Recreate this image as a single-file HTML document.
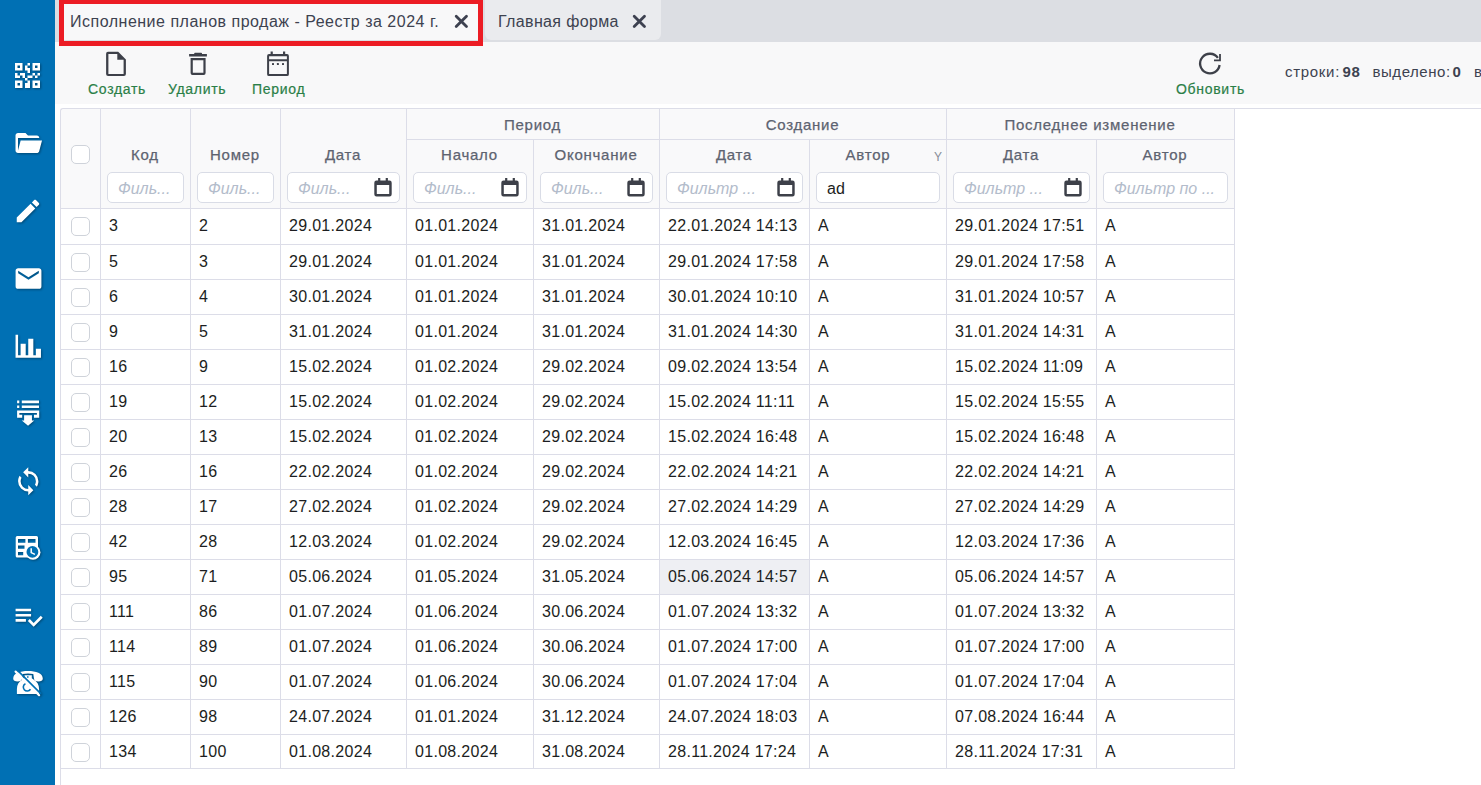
<!DOCTYPE html><html><head><meta charset="utf-8"><style>html,body{margin:0;padding:0}
body{width:1481px;height:785px;overflow:hidden;background:#fff;position:relative;font-family:"Liberation Sans",sans-serif;color:#212529}
div{box-sizing:border-box}
.abs{position:absolute}
#side{position:absolute;left:0;top:0;width:55px;height:785px;background:#0070b4}
#side svg{position:absolute;left:14px;width:28px;height:28px}
#tabbar{position:absolute;left:55px;top:0;width:1426px;height:42px;background:#dcdee3}
#toolbar{position:absolute;left:55px;top:42px;width:1426px;height:62px;background:#f8f8f9}
.tab{position:absolute;top:0;height:40px;background:#eaebee;border-radius:0 0 6px 6px;font-size:16px;color:#3d4250;line-height:42px;white-space:nowrap}
.tab.act{background:#f8f8f9}
.redbox{position:absolute;left:59px;top:0;width:424px;height:46px;border:5px solid #ec1c24;border-top-width:4px}
.btn{position:absolute;font-size:14px;font-weight:normal;-webkit-text-stroke:0.2px #2b7f48;letter-spacing:0.7px;color:#2b7f48;white-space:nowrap}
.hbg{position:absolute;background:#f9f9fa}
.vl{position:absolute;width:1px;background:#dcdde8}
.hl{position:absolute;height:1px;background:#dcdde8}
.cb{position:absolute;width:19px;height:19px;border:1px solid #cfd3da;border-radius:5px;background:#fff}
.cell{position:absolute;font-size:16px;padding-left:8px;letter-spacing:0.3px;white-space:nowrap;overflow:hidden;color:#1c1e21}
.hlc{background:#eeeff3}
.hd{position:absolute;font-size:15px;font-weight:normal;-webkit-text-stroke:0.25px #5d6370;letter-spacing:0.75px;color:#5d6370;text-align:center;white-space:nowrap}
.inp{position:absolute;top:172px;height:31px;border:1px solid #d9dce6;border-radius:5px;background:#fff;font-size:16px;font-style:italic;color:#b3bccb;padding-left:10px;padding-top:1px;line-height:29px;white-space:nowrap;overflow:hidden}
.sh{filter:drop-shadow(1px 1px 0.8px rgba(0,0,0,0.35))}
.tt{position:absolute;top:1px}
.stats{position:absolute;font-size:15px;letter-spacing:0.7px;color:#3d4250;white-space:nowrap}
.stats b{font-weight:bold}
.inp.val{font-style:normal;color:#1c1e21}
</style></head><body>
<div id="side">
<svg style="left:15px;top:63px;width:25px;height:25px" viewBox="0 0 25 25" class="sh"><path fill="#fff" fill-rule="nonzero" d="M0.0,0.0H7.5V7.5H0.0Z M2.5,2.5V5.0H5.0V2.5Z M17.5,0.0H25.0V7.5H17.5Z M20.0,2.5V5.0H22.5V2.5Z M0.0,17.5H7.5V25.0H0.0Z M2.5,20.0V22.5H5.0V20.0Z M17.5,17.5H25.0V25.0H17.5Z M20.0,20.0V22.5H22.5V20.0Z M12.5,0.0H15.0V2.5H12.5Z M10.0,2.5H12.5V5.0H10.0Z M10.0,5.0H12.5V7.5H10.0Z M12.5,5.0H15.0V7.5H12.5Z M12.5,7.5H15.0V10.0H12.5Z M0.0,10.0H2.5V12.5H0.0Z M5.0,10.0H7.5V12.5H5.0Z M7.5,10.0H10.0V12.5H7.5Z M17.5,10.0H20.0V12.5H17.5Z M22.5,10.0H25.0V12.5H22.5Z M0.0,12.5H2.5V15.0H0.0Z M2.5,12.5H5.0V15.0H2.5Z M7.5,12.5H10.0V15.0H7.5Z M12.5,12.5H15.0V15.0H12.5Z M15.0,12.5H17.5V15.0H15.0Z M20.0,12.5H22.5V15.0H20.0Z M10.0,15.0H12.5V17.5H10.0Z M12.5,17.5H15.0V20.0H12.5Z M12.5,20.0H15.0V22.5H12.5Z M12.5,22.5H15.0V25.0H12.5Z M10.0,20.0H12.5V22.5H10.0Z M10.0,22.5H12.5V25.0H10.0Z"/></svg>
<svg style="left:13px;top:127.7px;width:30px;height:30px" viewBox="0 0 24 24" class="sh"><path fill="#fff" d="M19,20H4C2.89,20 2,19.1 2,18V6C2,4.89 2.89,4 4,4H10L12,6H19A2,2 0 0,1 21,8H21L4,8V18L6.14,10H23.21L20.93,18.5C20.7,19.37 19.92,20 19,20Z"/></svg>
<svg style="left:12.6px;top:195.8px;width:30px;height:30px" viewBox="0 0 24 24" class="sh"><path fill="#fff" d="M20.71,7.04C21.1,6.65 21.1,6 20.71,5.63L18.37,3.29C18,2.9 17.35,2.9 16.96,3.29L15.12,5.12L18.87,8.87M3,17.25V21H6.75L17.81,9.93L14.06,6.18L3,17.25Z"/></svg>
<svg style="left:12.7px;top:262.7px;width:31px;height:31px" viewBox="0 0 24 24" class="sh"><path fill="#fff" d="M20,8L12,13L4,8V6L12,11L20,6M20,4H4C2.89,4 2,4.89 2,6V18A2,2 0 0,0 4,20H20A2,2 0 0,0 22,18V6C22,4.89 21.1,4 20,4Z"/></svg>
<svg style="left:12.8px;top:331px;width:30.5px;height:30.5px" viewBox="0 0 24 24" class="sh"><path fill="#fff" d="M22,21H2V3H4V19H6V10H10V19H12V6H16V19H18V14H22V21Z"/></svg>
<svg style="left:16px;top:400px;width:26px;height:27px" viewBox="0 0 26 27" class="sh"><path fill="#fff" d="M1.1,0.5H3.3V3.2H1.1Z M5.8,0.5H23V3.2H5.8Z M1.1,5.4H3.3V8.1H1.1Z M5.8,5.4H23V8.1H5.8Z M1.1,10.4H23.2V17.7H18V14.8H20.9V13.1H3.35V14.8H6.2V17.7H1.1Z M8.1,15.2H15.95V20.5H18.2L12.05,25.7L5.8,20.5H8.1Z"/></svg>
<svg style="left:12.8px;top:466px;width:30.5px;height:30.5px" viewBox="0 0 24 24" class="sh"><path fill="#fff" d="M12,18A6,6 0 0,1 6,12C6,11 6.25,10.03 6.7,9.2L5.24,7.74C4.46,8.97 4,10.43 4,12A8,8 0 0,0 12,20V23L16,19L12,15M12,4V1L8,5L12,9V6A6,6 0 0,1 18,12C18,13 17.75,13.97 17.3,14.8L18.76,16.26C19.54,15.03 20,13.57 20,12A8,8 0 0,0 12,4Z"/></svg>
<svg style="left:15px;top:535px;width:27px;height:27px" viewBox="0 0 27 27" class="sh"><path fill="#fff" fill-rule="evenodd" d="M2.2,0.9H21.5A1.5,1.5 0 0 1 23,2.4V21.1A1.5,1.5 0 0 1 21.5,22.6H2.2A1.5,1.5 0 0 1 0.7,21.1V2.4A1.5,1.5 0 0 1 2.2,0.9Z M3,4.1V7.7H10.4V4.1Z M12.9,4.1V7.7H20.5V4.1Z M3,10.4V13.7H9.5V10.4Z M3,16.9V20.2H8.2V16.9Z"/><circle cx="18" cy="17.3" r="7.45" fill="#fff"/><circle cx="17.4" cy="16.9" r="5.9" fill="#0070b4"/><path d="M16.2,13.3V17.6L19.9,19.4" fill="none" stroke="#fff" stroke-width="1.5"/></svg>
<svg style="left:12.7px;top:600.5px;width:31px;height:31px" viewBox="0 0 24 24" class="sh"><path fill="#fff" d="M14,10H2V12H14V10M14,6H2V8H14V6M2,16H10V14H2V16M21.5,11.5L23,13L16,20L11.5,15.5L13,14L16,17L21.5,11.5Z"/></svg>
<svg style="left:11px;top:668px;width:34px;height:32px" viewBox="0 0 34 32" class="sh"><path fill="#fff" d="M2.2,10.5C2.2,5 9,2.9 17,2.9C25,2.9 31.8,5 31.8,10.5C31.8,12.8 30,13.5 27.5,13.5C24.5,13.5 23,12.5 23,10.5L22.3,5.9C19,5.2 15,5.2 11.7,5.9L11,10.5C11,12.5 9.5,13.5 6.5,13.5C4,13.5 2.2,12.8 2.2,10.5Z"/><path fill="#fff" d="M13.5,7.3H20.8V10.2L22.5,11.5C26,13.5 28.1,16.5 28.1,21V26.1H5.9V21C5.9,16.5 8,13.5 11.5,11.5L13.5,10.2Z"/><rect x="16.1" y="8.2" width="1.4" height="1.6" fill="#0070b4"/><path d="M19.5,21.2A3.9,3.9 0 1 1 14.5,15.6" fill="none" stroke="#0070b4" stroke-width="1.6"/><path d="M6.2,2.1L30,25.9" stroke="#0070b4" stroke-width="1.7"/><path d="M4.6,3.6L28.1,27.2" stroke="#fff" stroke-width="2.2" stroke-linecap="round"/></svg>
</div>
<div id="tabbar"></div>
<div id="toolbar"></div>
<div class="tab act" style="left:59px;width:424px"><span class="tt" style="left:11px;letter-spacing:0.5px">Исполнение планов продаж - Реестр за 2024 г.</span>
<svg style="position:absolute;left:389px;top:8px" width="26" height="26" viewBox="0 0 26 26"><path d="M8.2,8.2L18.5,18.5M18.5,8.2L8.2,18.5" stroke="#3d4150" stroke-width="2.8" stroke-linecap="round"/></svg></div>
<div class="redbox"></div>
<div class="tab" style="left:485px;width:176px"><span class="tt" style="left:13px;letter-spacing:0.35px">Главная форма</span>
<svg style="position:absolute;left:141px;top:8px" width="26" height="26" viewBox="0 0 26 26"><path d="M8.2,8.2L18.5,18.5M18.5,8.2L8.2,18.5" stroke="#3d4150" stroke-width="2.8" stroke-linecap="round"/></svg></div>

<svg class="abs" style="left:100px;top:48px" width="32" height="32" viewBox="0 0 32 32"><path fill="#3d4049" fill-rule="evenodd" d="M8,3.7H18.2L25.9,11.4V26.1A2,2 0 0 1 23.9,28.1H8.1A2,2 0 0 1 6.1,26.1V5.7A2,2 0 0 1 8,3.7Z M8.4,5.9V25.9H23.6V11.8H17.3V5.9Z"/></svg>
<svg class="abs" style="left:182px;top:48px" width="32" height="32" viewBox="0 0 32 32"><path fill="#3d4049" fill-rule="evenodd" d="M13,4.7H19.2A0.8,0.8 0 0 1 20,5.5V6.1H24.9V8.6H7.1V6.1H12.2V5.5A0.8,0.8 0 0 1 13,4.7Z M8.6,10H23.6V25A1.9,1.9 0 0 1 21.7,26.9H10.5A1.9,1.9 0 0 1 8.6,25Z M10.8,12.2V24.7H21.4V12.2Z"/></svg>
<svg class="abs" style="left:262px;top:48px" width="32" height="32" viewBox="0 0 32 32"><path fill="#3d4049" fill-rule="evenodd" d="M8.6,3.5H10.8V6.1H21V3.5H23.2V6.1H25A1.9,1.9 0 0 1 26.9,8V26.2A1.9,1.9 0 0 1 25,28.1H7A1.9,1.9 0 0 1 5.1,26.2V8A1.9,1.9 0 0 1 7,6.1H8.6Z M7.1,8.2V11.2H24.9V8.2Z M7.1,13.2V26.1H24.9V13.2Z"/><rect x="10" y="14.9" width="2" height="2" rx="0.5" fill="#3d4049"/><rect x="14.9" y="14.9" width="2" height="2" rx="0.5" fill="#3d4049"/><rect x="20" y="14.9" width="2" height="2" rx="0.5" fill="#3d4049"/></svg>
<svg class="abs" style="left:1194px;top:48px" width="32" height="32" viewBox="0 0 32 32"><path d="M25.6,17.0A9.8,9.8 0 1 1 23.9,9.9" fill="none" stroke="#3d4049" stroke-width="2.3"/><path fill="#3d4049" d="M25.1,6.1H26.9V13.2H20V11.4H25.1Z"/></svg>
<div class="btn" style="left:88px;top:81px">Создать</div>
<div class="btn" style="left:168px;top:81px">Удалить</div>
<div class="btn" style="left:252px;top:81px">Период</div>
<div class="btn" style="left:1176px;top:81px">Обновить</div>
<div class="stats" style="left:1285px;top:63px">строки:</div><div class="stats" style="left:1342.5px;top:63px;font-weight:bold">98</div><div class="stats" style="left:1372.5px;top:63px;letter-spacing:0.55px">выделено:</div><div class="stats" style="left:1452.5px;top:63px;font-weight:bold">0</div><div class="stats" style="left:1474px;top:63px">в</div>

<div class="hbg" style="left:61px;top:109px;width:1173px;height:99px;border-top-left-radius:2px"></div><div class="vl" style="left:100px;top:108px;height:660px"></div><div class="vl" style="left:190px;top:108px;height:660px"></div><div class="vl" style="left:280px;top:108px;height:660px"></div><div class="vl" style="left:406px;top:108px;height:660px"></div><div class="vl" style="left:659px;top:108px;height:660px"></div><div class="vl" style="left:946px;top:108px;height:660px"></div><div class="vl" style="left:1234px;top:108px;height:660px"></div><div class="vl" style="left:533px;top:139px;height:629px"></div><div class="vl" style="left:809px;top:139px;height:629px"></div><div class="vl" style="left:1096px;top:139px;height:629px"></div><div class="abs" style="left:60px;top:108px;width:1421px;height:677px;border-top:1px solid #dcdde8;border-left:1px solid #dcdde8;border-top-left-radius:3px"></div><div class="hl" style="left:406px;top:139px;width:828px"></div><div class="hl" style="left:60px;top:208px;width:1175px"></div><div class="hl" style="left:60px;top:244px;width:1175px"></div><div class="hl" style="left:60px;top:279px;width:1175px"></div><div class="hl" style="left:60px;top:314px;width:1175px"></div><div class="hl" style="left:60px;top:349px;width:1175px"></div><div class="hl" style="left:60px;top:384px;width:1175px"></div><div class="hl" style="left:60px;top:419px;width:1175px"></div><div class="hl" style="left:60px;top:454px;width:1175px"></div><div class="hl" style="left:60px;top:489px;width:1175px"></div><div class="hl" style="left:60px;top:524px;width:1175px"></div><div class="hl" style="left:60px;top:559px;width:1175px"></div><div class="hl" style="left:60px;top:594px;width:1175px"></div><div class="hl" style="left:60px;top:629px;width:1175px"></div><div class="hl" style="left:60px;top:664px;width:1175px"></div><div class="hl" style="left:60px;top:699px;width:1175px"></div><div class="hl" style="left:60px;top:734px;width:1175px"></div><div class="hl" style="left:60px;top:768px;width:1175px"></div><div class="cb" style="left:71px;top:217px"></div><div class="cell" style="left:101px;top:209px;width:89px;height:35px;line-height:33px">3</div><div class="cell" style="left:191px;top:209px;width:89px;height:35px;line-height:33px">2</div><div class="cell" style="left:281px;top:209px;width:125px;height:35px;line-height:33px">29.01.2024</div><div class="cell" style="left:407px;top:209px;width:126px;height:35px;line-height:33px">01.01.2024</div><div class="cell" style="left:534px;top:209px;width:125px;height:35px;line-height:33px">31.01.2024</div><div class="cell" style="left:660px;top:209px;width:149px;height:35px;line-height:33px">22.01.2024 14:13</div><div class="cell" style="left:810px;top:209px;width:136px;height:35px;line-height:33px">A</div><div class="cell" style="left:947px;top:209px;width:149px;height:35px;line-height:33px">29.01.2024 17:51</div><div class="cell" style="left:1097px;top:209px;width:137px;height:35px;line-height:33px">A</div><div class="cb" style="left:71px;top:253px"></div><div class="cell" style="left:101px;top:245px;width:89px;height:34px;line-height:33px">5</div><div class="cell" style="left:191px;top:245px;width:89px;height:34px;line-height:33px">3</div><div class="cell" style="left:281px;top:245px;width:125px;height:34px;line-height:33px">29.01.2024</div><div class="cell" style="left:407px;top:245px;width:126px;height:34px;line-height:33px">01.01.2024</div><div class="cell" style="left:534px;top:245px;width:125px;height:34px;line-height:33px">31.01.2024</div><div class="cell" style="left:660px;top:245px;width:149px;height:34px;line-height:33px">29.01.2024 17:58</div><div class="cell" style="left:810px;top:245px;width:136px;height:34px;line-height:33px">A</div><div class="cell" style="left:947px;top:245px;width:149px;height:34px;line-height:33px">29.01.2024 17:58</div><div class="cell" style="left:1097px;top:245px;width:137px;height:34px;line-height:33px">A</div><div class="cb" style="left:71px;top:288px"></div><div class="cell" style="left:101px;top:280px;width:89px;height:34px;line-height:33px">6</div><div class="cell" style="left:191px;top:280px;width:89px;height:34px;line-height:33px">4</div><div class="cell" style="left:281px;top:280px;width:125px;height:34px;line-height:33px">30.01.2024</div><div class="cell" style="left:407px;top:280px;width:126px;height:34px;line-height:33px">01.01.2024</div><div class="cell" style="left:534px;top:280px;width:125px;height:34px;line-height:33px">31.01.2024</div><div class="cell" style="left:660px;top:280px;width:149px;height:34px;line-height:33px">30.01.2024 10:10</div><div class="cell" style="left:810px;top:280px;width:136px;height:34px;line-height:33px">A</div><div class="cell" style="left:947px;top:280px;width:149px;height:34px;line-height:33px">31.01.2024 10:57</div><div class="cell" style="left:1097px;top:280px;width:137px;height:34px;line-height:33px">A</div><div class="cb" style="left:71px;top:323px"></div><div class="cell" style="left:101px;top:315px;width:89px;height:34px;line-height:33px">9</div><div class="cell" style="left:191px;top:315px;width:89px;height:34px;line-height:33px">5</div><div class="cell" style="left:281px;top:315px;width:125px;height:34px;line-height:33px">31.01.2024</div><div class="cell" style="left:407px;top:315px;width:126px;height:34px;line-height:33px">01.01.2024</div><div class="cell" style="left:534px;top:315px;width:125px;height:34px;line-height:33px">31.01.2024</div><div class="cell" style="left:660px;top:315px;width:149px;height:34px;line-height:33px">31.01.2024 14:30</div><div class="cell" style="left:810px;top:315px;width:136px;height:34px;line-height:33px">A</div><div class="cell" style="left:947px;top:315px;width:149px;height:34px;line-height:33px">31.01.2024 14:31</div><div class="cell" style="left:1097px;top:315px;width:137px;height:34px;line-height:33px">A</div><div class="cb" style="left:71px;top:358px"></div><div class="cell" style="left:101px;top:350px;width:89px;height:34px;line-height:33px">16</div><div class="cell" style="left:191px;top:350px;width:89px;height:34px;line-height:33px">9</div><div class="cell" style="left:281px;top:350px;width:125px;height:34px;line-height:33px">15.02.2024</div><div class="cell" style="left:407px;top:350px;width:126px;height:34px;line-height:33px">01.02.2024</div><div class="cell" style="left:534px;top:350px;width:125px;height:34px;line-height:33px">29.02.2024</div><div class="cell" style="left:660px;top:350px;width:149px;height:34px;line-height:33px">09.02.2024 13:54</div><div class="cell" style="left:810px;top:350px;width:136px;height:34px;line-height:33px">A</div><div class="cell" style="left:947px;top:350px;width:149px;height:34px;line-height:33px">15.02.2024 11:09</div><div class="cell" style="left:1097px;top:350px;width:137px;height:34px;line-height:33px">A</div><div class="cb" style="left:71px;top:393px"></div><div class="cell" style="left:101px;top:385px;width:89px;height:34px;line-height:33px">19</div><div class="cell" style="left:191px;top:385px;width:89px;height:34px;line-height:33px">12</div><div class="cell" style="left:281px;top:385px;width:125px;height:34px;line-height:33px">15.02.2024</div><div class="cell" style="left:407px;top:385px;width:126px;height:34px;line-height:33px">01.02.2024</div><div class="cell" style="left:534px;top:385px;width:125px;height:34px;line-height:33px">29.02.2024</div><div class="cell" style="left:660px;top:385px;width:149px;height:34px;line-height:33px">15.02.2024 11:11</div><div class="cell" style="left:810px;top:385px;width:136px;height:34px;line-height:33px">A</div><div class="cell" style="left:947px;top:385px;width:149px;height:34px;line-height:33px">15.02.2024 15:55</div><div class="cell" style="left:1097px;top:385px;width:137px;height:34px;line-height:33px">A</div><div class="cb" style="left:71px;top:428px"></div><div class="cell" style="left:101px;top:420px;width:89px;height:34px;line-height:33px">20</div><div class="cell" style="left:191px;top:420px;width:89px;height:34px;line-height:33px">13</div><div class="cell" style="left:281px;top:420px;width:125px;height:34px;line-height:33px">15.02.2024</div><div class="cell" style="left:407px;top:420px;width:126px;height:34px;line-height:33px">01.02.2024</div><div class="cell" style="left:534px;top:420px;width:125px;height:34px;line-height:33px">29.02.2024</div><div class="cell" style="left:660px;top:420px;width:149px;height:34px;line-height:33px">15.02.2024 16:48</div><div class="cell" style="left:810px;top:420px;width:136px;height:34px;line-height:33px">A</div><div class="cell" style="left:947px;top:420px;width:149px;height:34px;line-height:33px">15.02.2024 16:48</div><div class="cell" style="left:1097px;top:420px;width:137px;height:34px;line-height:33px">A</div><div class="cb" style="left:71px;top:463px"></div><div class="cell" style="left:101px;top:455px;width:89px;height:34px;line-height:33px">26</div><div class="cell" style="left:191px;top:455px;width:89px;height:34px;line-height:33px">16</div><div class="cell" style="left:281px;top:455px;width:125px;height:34px;line-height:33px">22.02.2024</div><div class="cell" style="left:407px;top:455px;width:126px;height:34px;line-height:33px">01.02.2024</div><div class="cell" style="left:534px;top:455px;width:125px;height:34px;line-height:33px">29.02.2024</div><div class="cell" style="left:660px;top:455px;width:149px;height:34px;line-height:33px">22.02.2024 14:21</div><div class="cell" style="left:810px;top:455px;width:136px;height:34px;line-height:33px">A</div><div class="cell" style="left:947px;top:455px;width:149px;height:34px;line-height:33px">22.02.2024 14:21</div><div class="cell" style="left:1097px;top:455px;width:137px;height:34px;line-height:33px">A</div><div class="cb" style="left:71px;top:498px"></div><div class="cell" style="left:101px;top:490px;width:89px;height:34px;line-height:33px">28</div><div class="cell" style="left:191px;top:490px;width:89px;height:34px;line-height:33px">17</div><div class="cell" style="left:281px;top:490px;width:125px;height:34px;line-height:33px">27.02.2024</div><div class="cell" style="left:407px;top:490px;width:126px;height:34px;line-height:33px">01.02.2024</div><div class="cell" style="left:534px;top:490px;width:125px;height:34px;line-height:33px">29.02.2024</div><div class="cell" style="left:660px;top:490px;width:149px;height:34px;line-height:33px">27.02.2024 14:29</div><div class="cell" style="left:810px;top:490px;width:136px;height:34px;line-height:33px">A</div><div class="cell" style="left:947px;top:490px;width:149px;height:34px;line-height:33px">27.02.2024 14:29</div><div class="cell" style="left:1097px;top:490px;width:137px;height:34px;line-height:33px">A</div><div class="cb" style="left:71px;top:533px"></div><div class="cell" style="left:101px;top:525px;width:89px;height:34px;line-height:33px">42</div><div class="cell" style="left:191px;top:525px;width:89px;height:34px;line-height:33px">28</div><div class="cell" style="left:281px;top:525px;width:125px;height:34px;line-height:33px">12.03.2024</div><div class="cell" style="left:407px;top:525px;width:126px;height:34px;line-height:33px">01.02.2024</div><div class="cell" style="left:534px;top:525px;width:125px;height:34px;line-height:33px">29.02.2024</div><div class="cell" style="left:660px;top:525px;width:149px;height:34px;line-height:33px">12.03.2024 16:45</div><div class="cell" style="left:810px;top:525px;width:136px;height:34px;line-height:33px">A</div><div class="cell" style="left:947px;top:525px;width:149px;height:34px;line-height:33px">12.03.2024 17:36</div><div class="cell" style="left:1097px;top:525px;width:137px;height:34px;line-height:33px">A</div><div class="cb" style="left:71px;top:568px"></div><div class="cell" style="left:101px;top:560px;width:89px;height:34px;line-height:33px">95</div><div class="cell" style="left:191px;top:560px;width:89px;height:34px;line-height:33px">71</div><div class="cell" style="left:281px;top:560px;width:125px;height:34px;line-height:33px">05.06.2024</div><div class="cell" style="left:407px;top:560px;width:126px;height:34px;line-height:33px">01.05.2024</div><div class="cell" style="left:534px;top:560px;width:125px;height:34px;line-height:33px">31.05.2024</div><div class="cell hlc" style="left:660px;top:560px;width:149px;height:34px;line-height:33px">05.06.2024 14:57</div><div class="cell" style="left:810px;top:560px;width:136px;height:34px;line-height:33px">A</div><div class="cell" style="left:947px;top:560px;width:149px;height:34px;line-height:33px">05.06.2024 14:57</div><div class="cell" style="left:1097px;top:560px;width:137px;height:34px;line-height:33px">A</div><div class="cb" style="left:71px;top:603px"></div><div class="cell" style="left:101px;top:595px;width:89px;height:34px;line-height:33px">111</div><div class="cell" style="left:191px;top:595px;width:89px;height:34px;line-height:33px">86</div><div class="cell" style="left:281px;top:595px;width:125px;height:34px;line-height:33px">01.07.2024</div><div class="cell" style="left:407px;top:595px;width:126px;height:34px;line-height:33px">01.06.2024</div><div class="cell" style="left:534px;top:595px;width:125px;height:34px;line-height:33px">30.06.2024</div><div class="cell" style="left:660px;top:595px;width:149px;height:34px;line-height:33px">01.07.2024 13:32</div><div class="cell" style="left:810px;top:595px;width:136px;height:34px;line-height:33px">A</div><div class="cell" style="left:947px;top:595px;width:149px;height:34px;line-height:33px">01.07.2024 13:32</div><div class="cell" style="left:1097px;top:595px;width:137px;height:34px;line-height:33px">A</div><div class="cb" style="left:71px;top:638px"></div><div class="cell" style="left:101px;top:630px;width:89px;height:34px;line-height:33px">114</div><div class="cell" style="left:191px;top:630px;width:89px;height:34px;line-height:33px">89</div><div class="cell" style="left:281px;top:630px;width:125px;height:34px;line-height:33px">01.07.2024</div><div class="cell" style="left:407px;top:630px;width:126px;height:34px;line-height:33px">01.06.2024</div><div class="cell" style="left:534px;top:630px;width:125px;height:34px;line-height:33px">30.06.2024</div><div class="cell" style="left:660px;top:630px;width:149px;height:34px;line-height:33px">01.07.2024 17:00</div><div class="cell" style="left:810px;top:630px;width:136px;height:34px;line-height:33px">A</div><div class="cell" style="left:947px;top:630px;width:149px;height:34px;line-height:33px">01.07.2024 17:00</div><div class="cell" style="left:1097px;top:630px;width:137px;height:34px;line-height:33px">A</div><div class="cb" style="left:71px;top:673px"></div><div class="cell" style="left:101px;top:665px;width:89px;height:34px;line-height:33px">115</div><div class="cell" style="left:191px;top:665px;width:89px;height:34px;line-height:33px">90</div><div class="cell" style="left:281px;top:665px;width:125px;height:34px;line-height:33px">01.07.2024</div><div class="cell" style="left:407px;top:665px;width:126px;height:34px;line-height:33px">01.06.2024</div><div class="cell" style="left:534px;top:665px;width:125px;height:34px;line-height:33px">30.06.2024</div><div class="cell" style="left:660px;top:665px;width:149px;height:34px;line-height:33px">01.07.2024 17:04</div><div class="cell" style="left:810px;top:665px;width:136px;height:34px;line-height:33px">A</div><div class="cell" style="left:947px;top:665px;width:149px;height:34px;line-height:33px">01.07.2024 17:04</div><div class="cell" style="left:1097px;top:665px;width:137px;height:34px;line-height:33px">A</div><div class="cb" style="left:71px;top:708px"></div><div class="cell" style="left:101px;top:700px;width:89px;height:34px;line-height:33px">126</div><div class="cell" style="left:191px;top:700px;width:89px;height:34px;line-height:33px">98</div><div class="cell" style="left:281px;top:700px;width:125px;height:34px;line-height:33px">24.07.2024</div><div class="cell" style="left:407px;top:700px;width:126px;height:34px;line-height:33px">01.01.2024</div><div class="cell" style="left:534px;top:700px;width:125px;height:34px;line-height:33px">31.12.2024</div><div class="cell" style="left:660px;top:700px;width:149px;height:34px;line-height:33px">24.07.2024 18:03</div><div class="cell" style="left:810px;top:700px;width:136px;height:34px;line-height:33px">A</div><div class="cell" style="left:947px;top:700px;width:149px;height:34px;line-height:33px">07.08.2024 16:44</div><div class="cell" style="left:1097px;top:700px;width:137px;height:34px;line-height:33px">A</div><div class="cb" style="left:71px;top:743px"></div><div class="cell" style="left:101px;top:735px;width:89px;height:33px;line-height:33px">134</div><div class="cell" style="left:191px;top:735px;width:89px;height:33px;line-height:33px">100</div><div class="cell" style="left:281px;top:735px;width:125px;height:33px;line-height:33px">01.08.2024</div><div class="cell" style="left:407px;top:735px;width:126px;height:33px;line-height:33px">01.08.2024</div><div class="cell" style="left:534px;top:735px;width:125px;height:33px;line-height:33px">31.08.2024</div><div class="cell" style="left:660px;top:735px;width:149px;height:33px;line-height:33px">28.11.2024 17:24</div><div class="cell" style="left:810px;top:735px;width:136px;height:33px;line-height:33px">A</div><div class="cell" style="left:947px;top:735px;width:149px;height:33px;line-height:33px">28.11.2024 17:31</div><div class="cell" style="left:1097px;top:735px;width:137px;height:33px;line-height:33px">A</div>
<div class="hd" style="left:406px;width:253px;top:116px;">Период</div><div class="hd" style="left:659px;width:287px;top:116px;">Создание</div><div class="hd" style="left:946px;width:288px;top:116px;">Последнее изменение</div><div class="hd" style="left:100px;width:90px;top:146px;">Код</div><div class="hd" style="left:190px;width:90px;top:146px;">Номер</div><div class="hd" style="left:280px;width:126px;top:146px;">Дата</div><div class="hd" style="left:406px;width:127px;top:146px;">Начало</div><div class="hd" style="left:533px;width:126px;top:146px;">Окончание</div><div class="hd" style="left:659px;width:150px;top:146px;">Дата</div><div class="hd" style="left:809px;width:118px;top:146px;">Автор</div><div class="hd" style="left:946px;width:150px;top:146px;">Дата</div><div class="hd" style="left:1096px;width:138px;top:146px;">Автор</div><div class="abs" style="left:934px;top:150px;font-size:12px;color:#878d98">Y</div><div class="cb" style="left:71px;top:145px"></div><div class="inp" style="left:107px;width:77px">Филь...</div><div class="inp" style="left:197px;width:77px">Филь...</div><div class="inp" style="left:287px;width:113px">Филь...<svg style="position:absolute;right:3px;top:1px" width="26" height="26" viewBox="0 0 26 26"><path fill="#3d4049" fill-rule="evenodd" d="M8.1,4H10.3V6.6H15.7V4H17.9V6.6H19.5A2.2,2.2 0 0 1 21.7,8.8V20.3A2.2,2.2 0 0 1 19.5,22.5H6.5A2.2,2.2 0 0 1 4.3,20.3V8.8A2.2,2.2 0 0 1 6.5,6.6H8.1Z M6.8,11.1V20H19.2V11.1Z"/></svg></div><div class="inp" style="left:413px;width:114px">Филь...<svg style="position:absolute;right:3px;top:1px" width="26" height="26" viewBox="0 0 26 26"><path fill="#3d4049" fill-rule="evenodd" d="M8.1,4H10.3V6.6H15.7V4H17.9V6.6H19.5A2.2,2.2 0 0 1 21.7,8.8V20.3A2.2,2.2 0 0 1 19.5,22.5H6.5A2.2,2.2 0 0 1 4.3,20.3V8.8A2.2,2.2 0 0 1 6.5,6.6H8.1Z M6.8,11.1V20H19.2V11.1Z"/></svg></div><div class="inp" style="left:540px;width:113px">Филь...<svg style="position:absolute;right:3px;top:1px" width="26" height="26" viewBox="0 0 26 26"><path fill="#3d4049" fill-rule="evenodd" d="M8.1,4H10.3V6.6H15.7V4H17.9V6.6H19.5A2.2,2.2 0 0 1 21.7,8.8V20.3A2.2,2.2 0 0 1 19.5,22.5H6.5A2.2,2.2 0 0 1 4.3,20.3V8.8A2.2,2.2 0 0 1 6.5,6.6H8.1Z M6.8,11.1V20H19.2V11.1Z"/></svg></div><div class="inp" style="left:666px;width:137px">Фильтр ...<svg style="position:absolute;right:3px;top:1px" width="26" height="26" viewBox="0 0 26 26"><path fill="#3d4049" fill-rule="evenodd" d="M8.1,4H10.3V6.6H15.7V4H17.9V6.6H19.5A2.2,2.2 0 0 1 21.7,8.8V20.3A2.2,2.2 0 0 1 19.5,22.5H6.5A2.2,2.2 0 0 1 4.3,20.3V8.8A2.2,2.2 0 0 1 6.5,6.6H8.1Z M6.8,11.1V20H19.2V11.1Z"/></svg></div><div class="inp val" style="left:816px;width:124px">ad</div><div class="inp" style="left:953px;width:137px">Фильтр ...<svg style="position:absolute;right:3px;top:1px" width="26" height="26" viewBox="0 0 26 26"><path fill="#3d4049" fill-rule="evenodd" d="M8.1,4H10.3V6.6H15.7V4H17.9V6.6H19.5A2.2,2.2 0 0 1 21.7,8.8V20.3A2.2,2.2 0 0 1 19.5,22.5H6.5A2.2,2.2 0 0 1 4.3,20.3V8.8A2.2,2.2 0 0 1 6.5,6.6H8.1Z M6.8,11.1V20H19.2V11.1Z"/></svg></div><div class="inp" style="left:1103px;width:125px">Фильтр по ...</div>
</body></html>
